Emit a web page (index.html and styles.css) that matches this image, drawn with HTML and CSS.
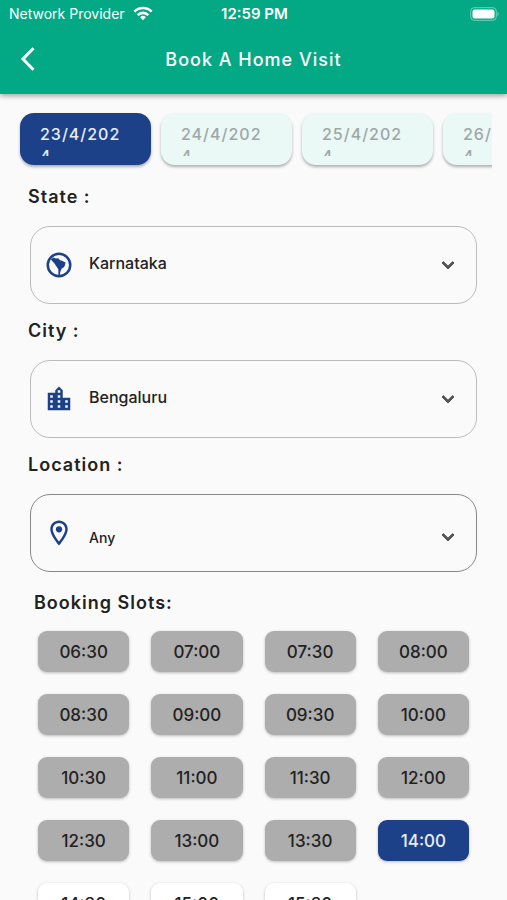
FILE: index.html
```html
<!DOCTYPE html>
<html lang="en">
<head>
<meta charset="UTF-8" />
<meta name="viewport" content="width=device-width, initial-scale=1" />
<title>Book A Home Visit</title>
<link rel="stylesheet" href="styles.css">
</head>
<body>

<header class="header">
  <div class="status-bar">
    <div class="network">
      <span>Network Provider</span>
      <svg width="20" height="15" viewBox="0 0 20 15" fill="none" stroke="#fff" stroke-width="2.6" aria-hidden="true">
        <path d="M1.4 5.6a12.2 12.2 0 0 1 17.2 0" />
        <path d="M4.7 9.1a7.5 7.5 0 0 1 10.6 0" />
        <path d="M10 14.2l-2.9-2.9a4.1 4.1 0 0 1 5.8 0z" fill="#fff" stroke="none" />
      </svg>
    </div>
    <span class="clock">12:59 PM</span>
    <svg class="battery" width="30" height="14" viewBox="0 0 30 14" aria-hidden="true">
      <rect x=".7" y=".7" width="25.6" height="12.6" rx="3.5" fill="none" stroke="#fff" stroke-opacity=".45" />
      <rect x="2.5" y="2.5" width="22" height="9" rx="2" fill="#fff" />
      <path d="M27.5 4.8a2.6 2.6 0 0 1 0 4.4z" fill="#fff" fill-opacity=".45" />
    </svg>
  </div>
  <div class="title-bar">
    <button class="back-btn" aria-label="Back">
      <svg width="16" height="24" viewBox="0 0 16 24" fill="none" stroke="#fff" stroke-width="3" aria-hidden="true">
        <path d="M13.5 1.2L3 12l10.5 10.8" />
      </svg>
    </button>
    <h1>Book A Home Visit</h1>
  </div>
</header>

<main class="content">
  <div class="dates">
    <button class="date active"><span>23/4/2024</span></button>
    <button class="date"><span>24/4/2024</span></button>
    <button class="date"><span>25/4/2024</span></button>
    <button class="date"><span>26/4/2024</span></button>
  </div>

  <div class="field">
    <label for="state">State :</label>
    <div class="select-box">
      <svg class="icon" viewBox="0 0 24 24" aria-hidden="true">
        <circle cx="12" cy="12" r="9" fill="none" stroke="currentColor" stroke-width="2" />
        <path d="M5.500 7.500L7.500 6l2 .8 2-.3 1.300 1.700 1.700.3 2.700 1.500-.5 2.300-.8 1.500-1.700 1-1.200 2.700L12.700 21h-1.200v-5.500L9.900 13 8.200 10.600z" fill="currentColor" />
      </svg>
      <select id="state">
        <option>Karnataka</option>
      </select>
      <svg class="chevron" viewBox="0 0 24 24" aria-hidden="true"><path d="M7.410 8.590L12 13.170l4.590-4.580L18 10l-6 6-6-6z" /></svg>
    </div>
  </div>

  <div class="field">
    <label for="city">City :</label>
    <div class="select-box">
      <svg class="icon" viewBox="0 0 24 24" aria-hidden="true">
        <path d="M15 11V5l-3-3-3 3v2H3v14h18V11h-6zm-8 8H5v-2h2v2zm0-4H5v-2h2v2zm0-4H5V9h2v2zm6 8h-2v-2h2v2zm0-4h-2v-2h2v2zm0-4h-2V9h2v2zm0-4h-2V5h2v2zm6 12h-2v-2h2v2zm0-4h-2v-2h2v2z" fill="currentColor" />
      </svg>
      <select id="city">
        <option>Bengaluru</option>
      </select>
      <svg class="chevron" viewBox="0 0 24 24" aria-hidden="true"><path d="M7.410 8.590L12 13.170l4.590-4.580L18 10l-6 6-6-6z" /></svg>
    </div>
  </div>

  <div class="field">
    <label for="location">Location :</label>
    <div class="select-box location">
      <svg class="icon" viewBox="0 0 24 24" aria-hidden="true">
        <path d="M12 2C8.130 2 5 5.130 5 9c0 5.250 7 13 7 13s7-7.750 7-13c0-3.870-3.130-7-7-7zM7 9c0-2.760 2.240-5 5-5s5 2.240 5 5c0 2.880-2.880 7.190-5 9.880C9.920 16.210 7 11.850 7 9z" fill="currentColor" />
        <circle cx="12" cy="9" r="2.5" fill="currentColor" />
      </svg>
      <select id="location">
        <option>Any</option>
      </select>
      <svg class="chevron" viewBox="0 0 24 24" aria-hidden="true"><path d="M7.410 8.590L12 13.170l4.590-4.580L18 10l-6 6-6-6z" /></svg>
    </div>
  </div>

  <h2>Booking Slots:</h2>
  <div class="slots">
    <button class="slot" disabled>06:30</button>
    <button class="slot" disabled>07:00</button>
    <button class="slot" disabled>07:30</button>
    <button class="slot" disabled>08:00</button>
    <button class="slot" disabled>08:30</button>
    <button class="slot" disabled>09:00</button>
    <button class="slot" disabled>09:30</button>
    <button class="slot" disabled>10:00</button>
    <button class="slot" disabled>10:30</button>
    <button class="slot" disabled>11:00</button>
    <button class="slot" disabled>11:30</button>
    <button class="slot" disabled>12:00</button>
    <button class="slot" disabled>12:30</button>
    <button class="slot" disabled>13:00</button>
    <button class="slot" disabled>13:30</button>
    <button class="slot active">14:00</button>
    <button class="slot">14:30</button>
    <button class="slot">15:00</button>
    <button class="slot">15:30</button>
  </div>
</main>

</body>
</html>
```
FILE: styles.css
```css
* {
  box-sizing: border-box;
}

body {
  margin: 0;
  height: 100vh;
  display: flex;
  flex-direction: column;
  background: #fafafa;
  color: #222;
  font-family: Inter, "Liberation Sans", sans-serif;
}

button,
select {
  font-family: inherit;
  border: none;
  cursor: pointer;
}

.header {
  flex-shrink: 0;
  background: #02a984;
  color: #fff;
  box-shadow: 0 2px 5px rgba(0,0,0,0.35);
  z-index: 1;
}

.status-bar {
  display: grid;
  grid-template-columns: 1fr auto 1fr;
  align-items: center;
  height: 27px;
  padding: 0 7px 0 9px;
  font-size: 14px;
}

.network {
  display: flex;
  align-items: center;
  gap: 8px;
}

.clock {
  font-size: 15px;
  font-weight: 600;
}

.battery {
  justify-self: end;
}

.title-bar {
  display: grid;
  grid-template-columns: 40px 1fr 40px;
  align-items: center;
  height: 67px;
  padding: 0 8px 3px;
}

.back-btn {
  display: flex;
  justify-content: center;
  padding: 8px 0;
  background: none;
}

h1 {
  margin: 0;
  font-size: 18px;
  font-weight: 500;
  letter-spacing: 1px;
  text-align: center;
}

.content {
  flex: 1;
  overflow-y: auto;
  scrollbar-width: none;
}

.dates {
  display: flex;
  gap: 10px;
  margin: 0 15px;
  padding: 19px 5px 5px;
  overflow-x: auto;
  scrollbar-width: none;
}

.date {
  flex: 0 0 131px;
  height: 52px;
  padding: 10px 24px 9px 20px;
  border-radius: 14px;
  background: #eaf8f6;
  color: #9fa7a5;
  box-shadow: 0 2px 3px rgba(0,0,0,0.3);
  font-size: 16px;
  font-weight: 500;
  line-height: 22px;
  letter-spacing: 1px;
  text-align: left;
}

.date span {
  display: block;
  height: 100%;
  overflow: hidden;
  word-break: break-all;
}

.date.active {
  background: #1d4189;
  color: #e8edf8;
}

.field {
  padding: 0 30px 0 28px;
}

.field label {
  display: block;
  padding: 13px 0 16px;
  font-size: 18px;
  font-weight: 600;
  line-height: 27px;
  letter-spacing: 1px;
}

.select-box {
  position: relative;
  display: flex;
  align-items: center;
  margin-left: 2px;
}

.select-box select {
  flex: 1;
  height: 78px;
  padding: 0 58px 4px;
  appearance: none;
  border: 1px solid #bbb;
  border-radius: 20px;
  background: none;
  color: #222;
  font-size: 16px;
  font-weight: 500;
}

.icon {
  position: absolute;
  left: 14px;
  width: 30px;
  height: 30px;
  color: #1d4189;
  pointer-events: none;
}

.chevron {
  position: absolute;
  right: 17px;
  width: 24px;
  height: 24px;
  fill: #555;
  stroke: #555;
  pointer-events: none;
}

.select-box.location select {
  padding: 8px 58px 0;
  border-color: #888;
  font-size: 14px;
}

.select-box.location .chevron {
  margin-top: 8px;
}

h2 {
  margin: 0;
  padding: 17px 34px 15px;
  font-size: 18px;
  font-weight: 600;
  line-height: 27px;
  letter-spacing: 1px;
}

.slots {
  display: grid;
  grid-template-columns: repeat(4, 1fr);
  gap: 22px;
  padding: 0 38px 22px;
}

.slot {
  height: 41px;
  padding: 0;
  border-radius: 9px;
  background: #fff;
  color: #222;
  box-shadow: 0 1px 3px rgba(0,0,0,0.25);
  font-size: 17px;
  font-weight: 500;
}

.slot:disabled {
  background: #adadad;
  cursor: default;
}

.slot.active {
  background: #1d4189;
  color: #e8edf8;
}
```
